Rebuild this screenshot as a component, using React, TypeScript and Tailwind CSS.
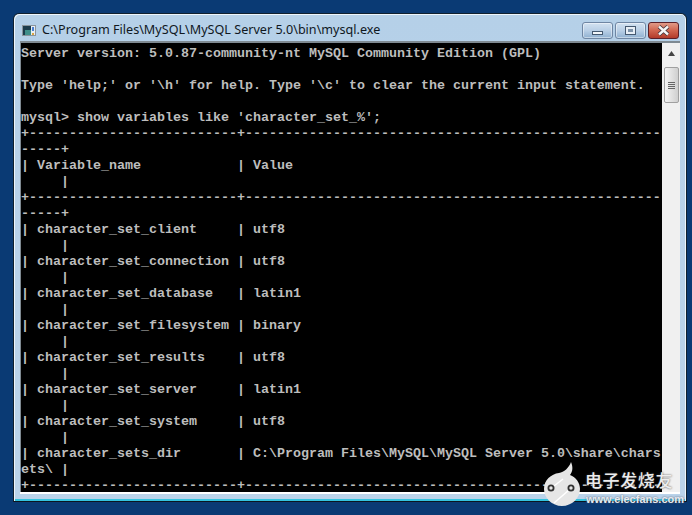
const dash = "+" + "-".repeat(26) + "+" + "-".repeat(52);
const wrapEnd = "-----+";
const row = (n: string, v: string) => "| " + n.padEnd(24, " ") + " | " + v;
const pipe = "     |";
const lines = [
  "Server version: 5.0.87-community-nt MySQL Community Edition (GPL)",
  "",
  "Type 'help;' or '\\h' for help. Type '\\c' to clear the current input statement.",
  "",
  "mysql> show variables like 'character_set_%';",
  dash,
  wrapEnd,
  row("Variable_name", "Value"),
  pipe,
  dash,
  wrapEnd,
  row("character_set_client", "utf8"),
  pipe,
  row("character_set_connection", "utf8"),
  pipe,
  row("character_set_database", "latin1"),
  pipe,
  row("character_set_filesystem", "binary"),
  pipe,
  row("character_set_results", "utf8"),
  pipe,
  row("character_set_server", "latin1"),
  pipe,
  row("character_set_system", "utf8"),
  pipe,
  row("character_sets_dir", "C:\\Program Files\\MySQL\\MySQL Server 5.0\\share\\chars"),
  "ets\\ |",
  dash,
];

function AppIcon() {
  return (
    <svg width="14" height="11" viewBox="0 0 14 11" className="shrink-0">
      <rect x="0.5" y="0.5" width="13" height="10" fill="#e8eef2" stroke="#8a949c" />
      <rect x="1" y="1" width="8" height="9" fill="#1d3c4c" />
      <rect x="3" y="5" width="6" height="5" fill="#3f8f8a" />
      <rect x="10" y="2" width="2" height="4" fill="#4a7fd0" />
      <rect x="10" y="8" width="2" height="2" fill="#d9a441" />
    </svg>
  );
}

function CaptionButton({ kind }: { kind: "min" | "max" }) {
  return (
    <div className="w-[31px] h-[17px] rounded-[3px] border border-[#6f86a3] bg-gradient-to-b from-[#d3e2f1] via-[#b9cfe6] to-[#8fb0d0] shadow-[inset_0_0_0_1px_rgba(255,255,255,0.45)] flex items-center justify-center">
      {kind === "min" ? (
        <div className="w-[11px] h-[4px] mt-[6px] bg-[#f2f6fa] border border-[#44586f]" />
      ) : (
        <div className="w-[11px] h-[9px] border border-[#44586f] bg-[#e8eff6] flex items-center justify-center">
          <div className="w-[5px] h-[3px] bg-[#7d93aa]" />
        </div>
      )}
    </div>
  );
}

export default function App() {
  return (
    <div className="relative w-[692px] h-[515px] overflow-hidden bg-[#0a3a74] pt-[13px] pl-[13px]">
      <div className="w-[674px] h-[489px] rounded-t-[6px] border border-[#10202e] border-b-[#0b1620] bg-gradient-to-b from-[#b5d0e8] via-[#b9d2ea] to-[#bad3ea] shadow-[inset_1px_1px_0_#eef5fb,inset_-1px_0_0_#eef5fb,inset_0_-2px_0_#35c3de] flex flex-col pl-[6px] pr-[6px]">
        <div className="h-[27px] pt-[5px] pl-[2px] shrink-0 flex items-center">
          <AppIcon />
          <div className="ml-[6px] text-[12.6px] text-[#10181f] font-['Noto_Sans','Open_Sans',sans-serif] whitespace-pre">
            C:\Program Files\MySQL\MySQL Server 5.0\bin\mysql.exe
          </div>
          <div className="ml-auto mr-[1px] flex gap-[2px]">
            <CaptionButton kind="min" />
            <CaptionButton kind="max" />
            <div className="w-[31px] h-[17px] rounded-[3px] border border-[#5a1f28] bg-gradient-to-b from-[#e09a88] via-[#d0654f] to-[#b23a2a] flex items-center justify-center">
              <svg width="13" height="11" viewBox="0 0 13 11">
                <path d="M2 1.5 L11 9.5 M11 1.5 L2 9.5" stroke="#3c3038" strokeWidth="4" />
                <path d="M2 1.5 L11 9.5 M11 1.5 L2 9.5" stroke="#f5f5f5" strokeWidth="2.4" />
              </svg>
            </div>
          </div>
        </div>
        <div className="h-[451px] shrink-0 flex border-t-[2px] border-l-[1px] border-t-[#7f8a92] border-l-[#7f8a92]">
          <div className="w-[641px] h-full shrink-0 bg-black overflow-hidden pt-[3px] font-['Liberation_Mono',monospace] font-bold text-[13.33px] leading-[16px] text-[#bdbdbd]">
            {lines.map((l, i) => (
              <div key={i} className="h-[16px] whitespace-pre">
                {l}
              </div>
            ))}
          </div>
          <div className="w-[18px] h-full shrink-0 bg-[#f0f0f0] flex flex-col items-center">
            <svg width="7" height="5" viewBox="0 0 7 5" className="mt-[8px]">
              <path d="M3.5 0 L7 5 H0 Z" fill="#444" />
            </svg>
            <div className="mt-[11px] w-[15px] h-[36px] rounded-[2px] border border-[#a0a0a0] bg-gradient-to-r from-[#f4f4f4] to-[#cfcfcf] flex flex-col items-center justify-center gap-[1px]">
              <div className="w-[7px] h-[1px] bg-[#666]" />
              <div className="w-[7px] h-[1px] bg-[#666]" />
              <div className="w-[7px] h-[1px] bg-[#666]" />
              <div className="w-[7px] h-[1px] bg-[#666]" />
            </div>
          </div>
        </div>
        <div className="h-[2px] bg-white" />
      </div>

      <svg width="36" height="44" viewBox="0 0 36 44" className="absolute left-[544px] top-[462px]">
        <path d="M27 0 C29 5 29 9 26 13 C32 15 36 21 36 27 C36 36 28 44 18 44 C8 44 0 36 0 27 C0 18 7 12 15 11 C20 10 25 6 27 0 Z" fill="#e6e6e6" />
        <path d="M10 24 L19 17 M25 28 L10 41" stroke="#fff" strokeWidth="1.5" />
        <circle cx="7" cy="26" r="2.6" fill="none" stroke="#333" strokeWidth="1.8" />
        <circle cx="27" cy="26" r="2.6" fill="none" stroke="#333" strokeWidth="1.8" />
      </svg>
      <div className="absolute left-[585px] top-[470px] text-[17px] leading-[20px] tracking-[0.6px] text-[#ececec] [text-shadow:0_0_2px_#444] font-['Noto_Sans_CJK_SC',sans-serif] font-medium whitespace-pre">
        电子发烧友
      </div>
      <div className="absolute left-[586px] top-[493px] text-[11px] leading-[12px] text-[#e4eaf0] [text-shadow:0_0_2px_#556] font-['Liberation_Sans',sans-serif] font-bold whitespace-pre">
        www.elecfans.com
      </div>
    </div>
  );
}
